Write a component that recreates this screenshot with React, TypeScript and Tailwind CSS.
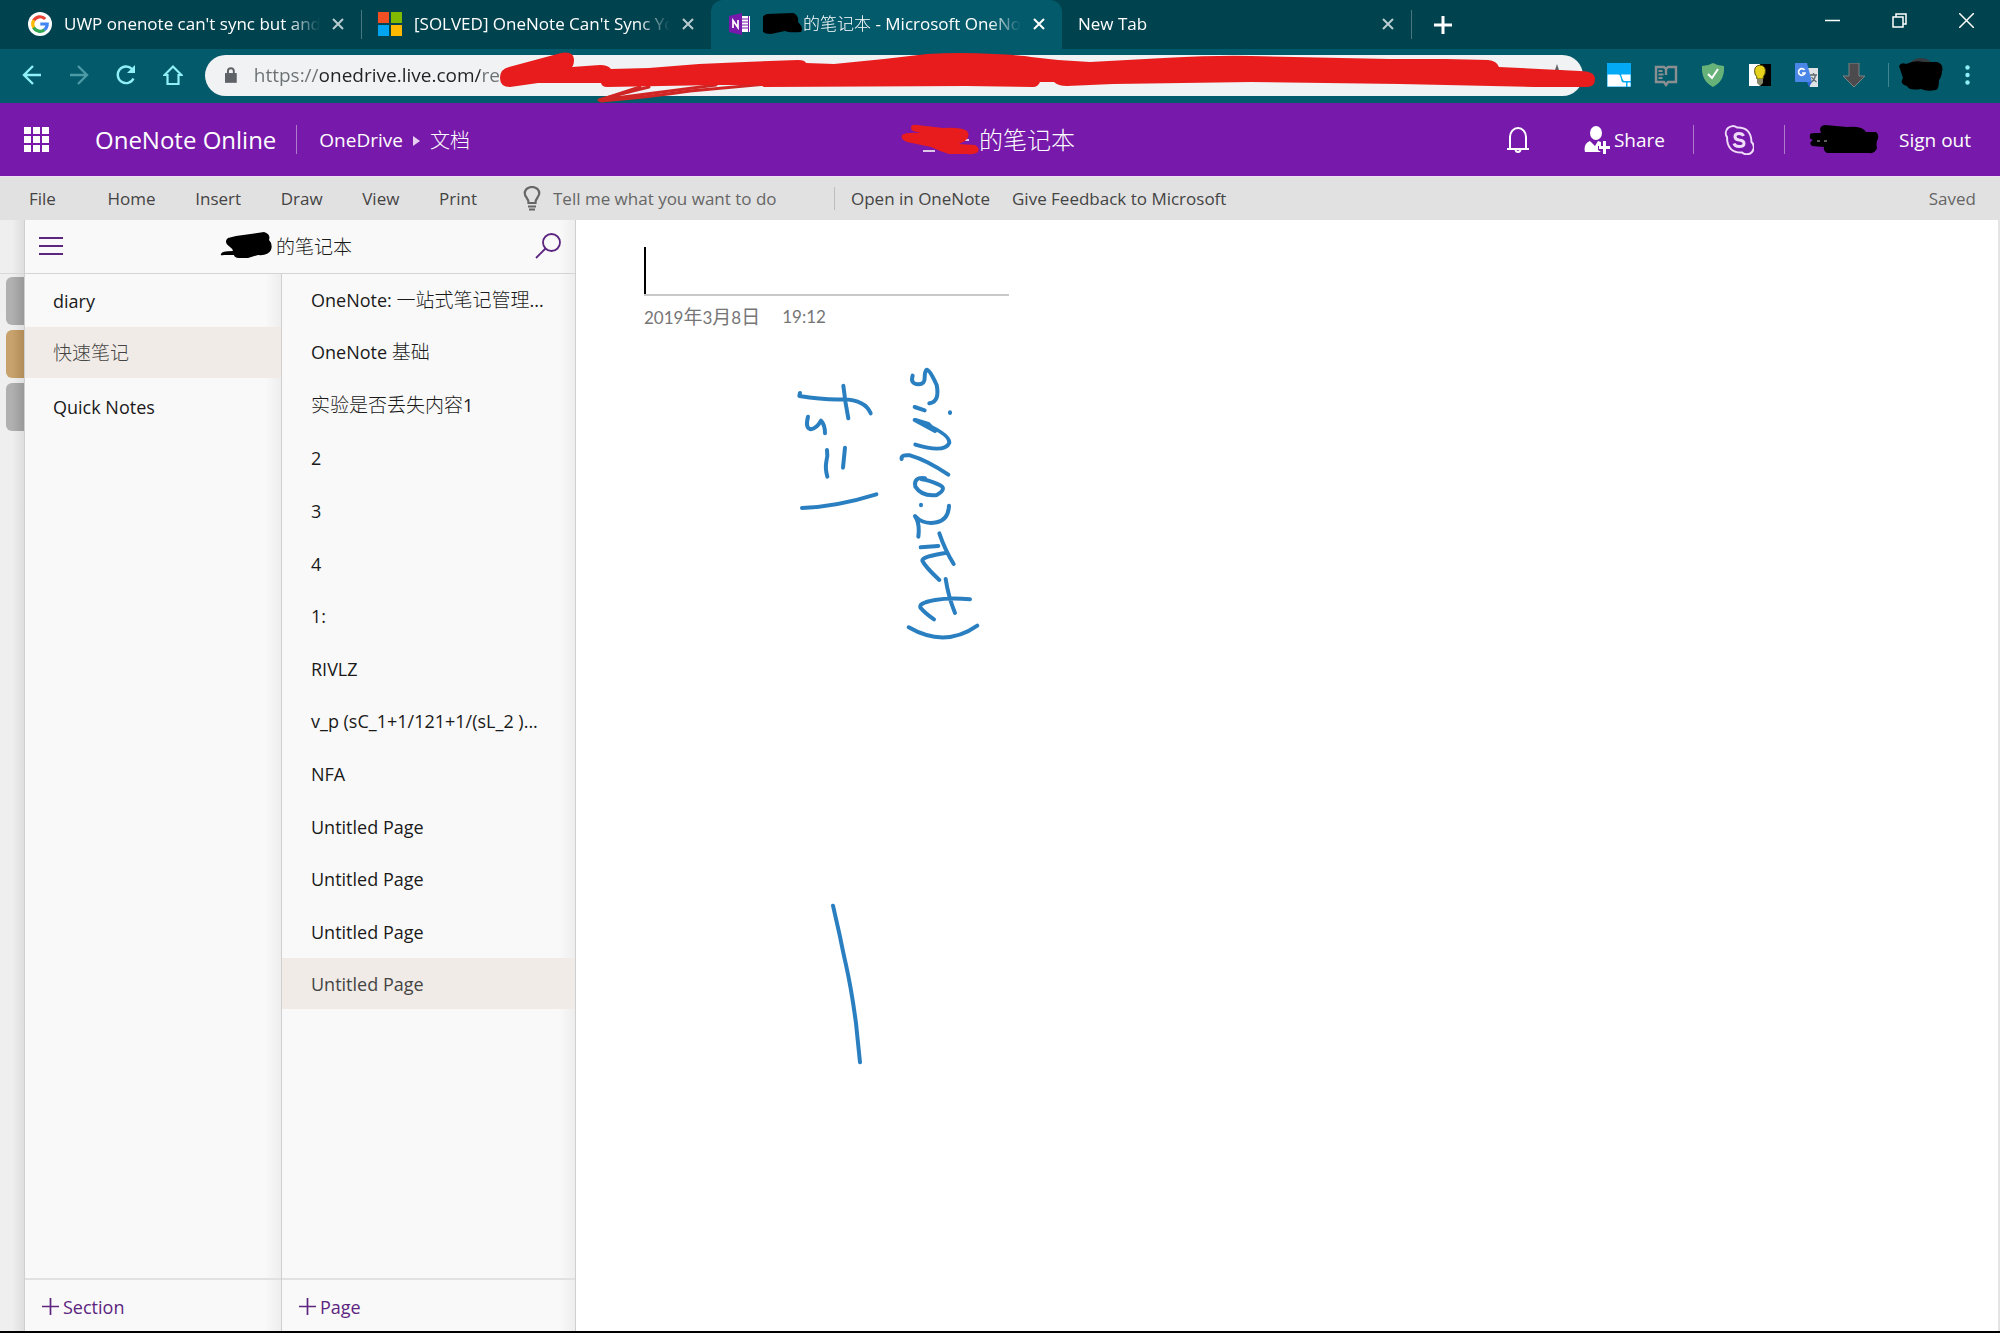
import type { ReactNode } from "react";

const CJK = "font-['Open_Sans','Noto_Sans_CJK_SC',sans-serif] font-light";

function Close({ className }: { className?: string }) {
  return (
    <svg className={className} viewBox="0 0 12 12" width="12" height="12" fill="none" stroke="currentColor" strokeWidth="2">
      <path d="M1 1l10 10M11 1L1 11" />
    </svg>
  );
}

function GoogleIcon() {
  return (
    <svg viewBox="0 0 24 24" width="24" height="24">
      <circle cx="12" cy="12" r="12" fill="#fff" />
      <g fill="none" strokeWidth="3.2">
        <path d="M17.2 7A7.2 7.2 0 0 0 5.7 8.5" stroke="#ea4335" />
        <path d="M5.9 8.2a7.2 7.2 0 0 0 0 7.6" stroke="#fbbc05" />
        <path d="M5.7 15.5a7.2 7.2 0 0 0 10.8 2.2" stroke="#34a853" />
        <path d="M16.3 17.8A7.2 7.2 0 0 0 19.2 12H12.3" stroke="#4285f4" />
      </g>
    </svg>
  );
}

function WindowsIcon() {
  return (
    <svg viewBox="0 0 24 24" width="24" height="24">
      <path fill="#f25022" d="M0 0h11v11H0z" />
      <path fill="#7fba00" d="M13 0h11v11H13z" />
      <path fill="#00a4ef" d="M0 13h11v11H0z" />
      <path fill="#ffb900" d="M13 13h11v11H13z" />
    </svg>
  );
}

function OneNoteIcon() {
  return (
    <svg viewBox="0 0 22 22" width="22" height="22">
      <path fill="#fff" d="M12 3h9v16h-9z" />
      <path stroke="#7719aa" strokeWidth="1" d="M13 6h6M13 9h6M13 12h6M13 15h6M19.500 3v16" fill="none" />
      <path fill="#7719aa" d="M0 3L13 0v22L0 19z" />
      <path d="M4 15V7.500l5 7V7" fill="none" stroke="#fff" strokeWidth="1.700" />
    </svg>
  );
}

function Tab({ icon, children, active, title }: { icon?: ReactNode; children: ReactNode; active?: boolean; title: string }) {
  return (
    <div
      className={
        active
          ? "relative flex h-full min-w-0 flex-1 items-center rounded-t-xl bg-[#035a6b] pr-[17px] pb-0.5 pl-[18px]"
          : "flex h-full min-w-0 flex-1 items-center pr-[17px] pb-0.5 pl-4"
      }
    >
      <button aria-label={title} className="flex min-w-0 flex-1 items-center gap-3 text-left">
        {icon}
        <span className="min-w-0 flex-1 overflow-hidden whitespace-nowrap [mask-image:linear-gradient(to_right,#000_calc(100%-32px),transparent)]">
          {children}
        </span>
      </button>
      <button aria-label="Close tab" className={active ? "ml-3 text-white" : "ml-3 text-[#b9cdd1]"}>
        <Close />
      </button>
    </div>
  );
}

function TabStrip() {
  return (
    <div className="flex h-[49px] items-center bg-[#00434f] pl-3 text-[17px] text-white">
      <div className="flex h-full w-[1400px] items-center">
        <Tab title="Search results" icon={<GoogleIcon />}>UWP onenote can't sync but and</Tab>
        <div className="h-[29px] w-px bg-[#4a7680]" />
        <Tab title="Solved" icon={<WindowsIcon />}>[SOLVED] OneNote Can't Sync Yo</Tab>
        <Tab title="Notebook" active icon={<OneNoteIcon />}>
          <span className="flex items-center">
            <svg viewBox="0 0 48 21" width="48" height="21" className="-ml-2 shrink-0">
              <path d="M2 14Q4 9 7 9Q6 3 12 1L38 0Q44 2 43 9Q49 15 46 19Q34 20 30 18L16 21Q8 21 7 17Q0 19 2 14z" />
            </svg>
            <span>
              <span className={CJK}>的笔记本</span> - Microsoft OneNo
            </span>
          </span>
        </Tab>
        <Tab title="New Tab">New Tab</Tab>
        <div className="h-[29px] w-px bg-[#4a7680]" />
      </div>
      <button aria-label="New tab" className="ml-[22px]">
        <svg viewBox="0 0 18 18" width="18" height="18" stroke="#fff" strokeWidth="3"><path d="M9 0v18M0 9h18" /></svg>
      </button>
      <div className="ml-auto flex items-center gap-[52px] pr-[26px] pb-2">
        <button aria-label="Minimize">
          <svg viewBox="0 0 15 15" width="15" height="15" stroke="#fff" strokeWidth="1.500"><path d="M0 7.500h15" /></svg>
        </button>
        <button aria-label="Restore">
          <svg viewBox="0 0 15 15" width="15" height="15" stroke="#fff" strokeWidth="1.500" fill="none"><path d="M1 4h10v10H1zM4 4V1h10v10h-3" /></svg>
        </button>
        <button aria-label="Close window">
          <svg viewBox="0 0 15 15" width="15" height="15" stroke="#fff" strokeWidth="1.500"><path d="M0 0l15 15M15 0L0 15" /></svg>
        </button>
      </div>
    </div>
  );
}

function NavButton({ label, children }: { label: string; children: ReactNode }) {
  return (
    <button aria-label={label}>
      <svg viewBox="0 0 20 22" width="20" height="22" fill="none" stroke="#8ff0f7" strokeWidth="2.400">{children}</svg>
    </button>
  );
}

function ExtIcon({ label, children }: { label: string; children: ReactNode }) {
  return (
    <button aria-label={label}>
      <svg viewBox="0 0 24 24" width="24" height="24">{children}</svg>
    </button>
  );
}

function Toolbar() {
  return (
    <div className="flex h-[54px] items-center bg-[#035a6b] pb-0.5 pl-[22px]">
      <div className="mr-[22px] flex items-center gap-[27px]">
        <NavButton label="Back"><path d="M19 11H3M11 2l-9 9 9 9" /></NavButton>
        <NavButton label="Forward"><path d="M1 11h16M9 2l9 9-9 9" stroke="#4c9aa6" /></NavButton>
        <NavButton label="Reload">
          <path d="M17.500 14.500A8.300 8.300 0 1 1 16 5" />
          <path d="M19 1v8h-8z" fill="#8ff0f7" stroke="none" />
        </NavButton>
        <NavButton label="Home"><path d="M4.500 11v9h11v-9h3L10 2.500 1.500 11z" strokeWidth="2.200" /></NavButton>
      </div>
      <div className="relative flex h-[41px] flex-1 items-center rounded-full bg-[#f0f2f3] pl-5">
        <svg viewBox="0 0 12 16" width="12" height="16" fill="#5f6368">
          <path d="M0 6h12v10H0z" />
          <path d="M3 7V4a3 3 0 0 1 6 0v3" fill="none" stroke="#5f6368" strokeWidth="2" />
        </svg>
        <input
          aria-label="Address"
          defaultValue="https://onedrive.live.com/re"
          className="ml-[17px] w-full bg-[linear-gradient(to_right,#6b7074_66px,#202124_66px,#202124_226px,#6b7074_226px)] bg-clip-text text-[19px] text-transparent outline-none"
        />
        <svg viewBox="490 45 1115 65" width="1115" height="65" className="pointer-events-none absolute top-[-10px] left-[285px]">
          <path d="M1557 64l2 6 6 1h-16l6-1z" fill="#5f6368" />
          <g fill="none" stroke="#d02525" strokeWidth="3" strokeLinejoin="round" strokeLinecap="round">
            <path d="M649 87Q620 94 599 100M601 101Q650 97 690 91L766 84" />
            <path d="M640 87L600 100Q660 92 716 85" />
          </g>
          <path
            fill="#e81c1c"
            d="M500 78Q500 69 509 67L561 53Q573 51 574 59Q574 65 572 67L600 65Q608 65 611 69L649 68L699 64L745 62L798 60Q805 60 806 63L834 64L884 59L927 54Q960 52 994 54Q1020 55 1031 57Q1060 61 1090 62L1164 58Q1220 55 1251 56L1389 59L1446 59L1488 60Q1497 61 1499 67L1580 71Q1595 71 1595 79Q1595 87 1587 87H1534L1400 84L1251 82L1113 84L1067 86Q1058 86 1054 82H1040Q1038 87 1033 87L966 86L764 87L760 85L716 85L607 87Q602 87 601 83H538L510 87Q500 87 500 78z"
          />
        </svg>
      </div>
      <div className="ml-6 flex items-center gap-[23px]">
        <ExtIcon label="Screenshot">
          <path fill="#03a9f4" d="M0 0h24v24H0z" /><path fill="#fff" d="M0.500 11.500H11.500Q13 11.500 13.500 14L14.500 18Q15 19.500 17 19.500H19V23.500H.5zM14 11.500H23.500V18H17.500Q16 18 15.500 16z" /><path fill="#fff" d="M20.500 19.500h3v4h-3z" />
        </ExtIcon>
        <ExtIcon label="Reader">
          <path fill="none" stroke="#8b8f91" strokeWidth="2.400" d="M2 4h8l2 2 2-2h8v15h-8l-2 3-2-3H2zM12 6v6" />
          <path stroke="#8b8f91" strokeWidth="1.800" d="M4.500 8h4M4.500 11.500h5M4.500 15h4" />
        </ExtIcon>
        <ExtIcon label="Ad blocker">
          <path fill="#67b279" d="M12 0q5 3 11 3 1 15-11 21Q0 18 1 3q6 0 11-3z" />
          <path d="M7 11l4 4 6-9" fill="none" stroke="#fff" strokeWidth="2" />
        </ExtIcon>
        <ExtIcon label="Lights">
          <path fill="#fff" d="M1 1h11v22H1z" /><path fill="#000" d="M12 1h11v22H12z" />
          <path fill="#e5d21c" stroke="#57520c" d="M9 16q0-3-2-5-2-8 5-9 7 1 5 9-2 2-2 5z" /><path fill="#88886a" d="M9 16h6v4l-3 3-3-3z" />
        </ExtIcon>
        <ExtIcon label="Translate">
          <path fill="#dfe3e6" d="M9 5h14v19H15z" /><path fill="#4a86e8" d="M0 0h12l5 19H1Q0 19 0 18z" /><path fill="#3367d6" d="M12 19h5l-3 5z" />
          <path d="M9.500 7A3.300 3.300 0 1 0 10 10H7" fill="none" stroke="#fff" strokeWidth="1.700" />
          <path d="M15 12h7M18.500 10v2M20.500 12q-1 5-4 7M16.500 14q2 3 5 5" fill="none" stroke="#5c6a70" strokeWidth="1.300" />
        </ExtIcon>
        <ExtIcon label="Download">
          <path fill="#4b4b4d" stroke="#7d8285" d="M7 0h10v13h6L12 24 1 13h6z" />
        </ExtIcon>
      </div>
      <div className="ml-[22px] h-6 w-px bg-[#3f8491]" />
      <button aria-label="Profile" className="ml-2.5">
        <svg viewBox="0 0 44 34" width="44" height="34">
          <circle cx="22" cy="14" r="14" fill="#33393f" />
          <path d="M0 8Q2 4 7 6Q16 2 24 4L38 4Q45 6 43 14Q42 20 40 22Q40 31 37 32Q28 34 22 31Q10 33 8 28Q0 26 4 20Q2 14 0 8z" />
        </svg>
      </button>
      <button aria-label="Menu" className="mr-[30px] ml-[22px]">
        <svg viewBox="0 0 5 20" width="5" height="20" fill="#8ff0f7">
          <circle cx="2.500" cy="2.500" r="2.200" /><circle cx="2.500" cy="10" r="2.200" /><circle cx="2.500" cy="17.500" r="2.200" />
        </svg>
      </button>
    </div>
  );
}

function Header() {
  return (
    <header className="relative flex h-[73px] items-center bg-[#7719aa] text-[19px] whitespace-nowrap text-white">
      <button aria-label="App launcher" className="ml-6">
        <svg viewBox="0 0 25 25" width="25" height="25" fill="#fff">
          <path d="M0 0h7v7H0zM9 0h7v7H9zM18 0h7v7h-7zM0 9h7v7H0zM9 9h7v7H9zM18 9h7v7h-7zM0 18h7v7H0zM9 18h7v7H9zM18 18h7v7h-7z" />
        </svg>
      </button>
      <a href="#home" className="ml-[46px] text-2xl">OneNote Online</a>
      <div className="ml-5 h-[29px] w-px bg-[#b07acb]" />
      <nav className="ml-[22px] flex items-center pt-0.5">
        <a href="#drive">OneDrive</a>
        <svg viewBox="0 0 7 10" width="7" height="10" fill="#e6d1f0" className="mx-2.5"><path d="M0 0l7 5-7 5z" /></svg>
        <a href="#docs" className={CJK + " text-xl"}>文档</a>
      </nav>
      <div className="absolute left-[901px] flex items-center">
        <svg viewBox="0 0 78 32" width="78" height="32">
          <path d="M22 27h12M62 16h6" stroke="#fff" strokeWidth="1.500" />
          <path fill="#e81c1c" d="M10 4Q10 0 16 1L42 4Q60 3 66 7Q70 12 64 17L58 20L74 21Q79 24 77 28Q73 31 66 30H48Q38 27 30 23L6 18Q-1 15 1 11Q5 8 20 9L12 7Q10 6 10 4z" />
        </svg>
        <span className={CJK + " text-2xl"}>的笔记本</span>
      </div>
      <div className="ml-auto flex items-center pr-[29px]">
        <button aria-label="Notifications">
          <svg viewBox="0 0 24 28" width="24" height="28" fill="none" stroke="#fff" strokeWidth="2">
            <path d="M4 23V11a8 9 0 0 1 16 0v12M1 23h22M9.500 23a2.500 3 0 0 0 5 0" />
          </svg>
        </button>
        <button className="ml-[54px] flex items-center gap-1">
          <svg viewBox="0 0 26 28" width="26" height="28" fill="#fff">
            <ellipse cx="12" cy="7" rx="6" ry="7" />
            <path d="M6 15l5 5 3-5 3 1v4h-3v4l3 2H1Q-1 18 6 15z" />
            <path d="M19 15h3v5h4v3h-4v5h-3v-5h-4v-3h4z" />
          </svg>
          <span className="pt-0.5">Share</span>
        </button>
        <div className="ml-7 h-[29px] w-px bg-[#b07acb]" />
        <button aria-label="Skype" className="ml-[30px]">
          <svg viewBox="0 0 30 30" width="30" height="30" fill="none" stroke="#efdcf8" strokeWidth="2">
            <path d="M3 12A7 7 0 0 1 13 2.500Q27 2 27.500 17A7 7 0 0 1 18 27.500Q3 28 3 12z" />
            <path d="M19.500 11Q18.500 8.500 15 8.500q-4 0-4 3t4 3.500q5 .5 5 3.500t-5 3q-4 0-5-3" strokeWidth="3" />
          </svg>
        </button>
        <div className="ml-[30px] h-[29px] w-px bg-[#b07acb]" />
        <svg viewBox="0 0 70 29" width="70" height="29" className="ml-6">
          <path d="M1 11Q0 8 6 8L12 8Q9 1 16 0L38 2Q54 1 57 7L67 7Q71 10 68 16Q67 19 68 23Q66 29 60 28H18Q14 26 15 22L3 21Q-1 18 4 15Q0 14 1 11z" />
          <path d="M8 16h14" stroke="#bbb" strokeDasharray="3 4" />
        </svg>
        <a href="#signout" className="ml-5 pt-0.5">Sign out</a>
      </div>
    </header>
  );
}

function Ribbon() {
  return (
    <div className="flex h-11 items-center border-t border-[#eedff5] bg-[#e1e1e1] pr-6 pl-[29px] text-[17px] whitespace-nowrap text-[#444]">
      <div className="flex w-[448px] justify-between">
        {["File", "Home", "Insert", "Draw", "View", "Print"].map((t) => (
          <button key={t} className="first:mr-3">{t}</button>
        ))}
      </div>
      <label className="ml-[46px] flex items-center gap-3">
        <svg viewBox="0 0 18 25" width="18" height="25" fill="none" stroke="#666" strokeWidth="2.200">
          <path d="M5.500 17q0-3-2-5.500Q0 7 3.500 3q5.500-4 11 0 3.500 4 0 8.500-2 2.500-2 5.500z" />
          <path d="M5 20.500h8M6 23.500h6" />
        </svg>
        <input aria-label="Tell me" placeholder="Tell me what you want to do" className="w-[281px] outline-none placeholder:text-[#666]" />
      </label>
      <div className="h-[23px] w-px bg-[#bdbdbd]" />
      <button className="ml-4">Open in OneNote</button>
      <button className="ml-[22px]">Give Feedback to Microsoft</button>
      <span className="ml-auto text-[#666]">Saved</span>
    </div>
  );
}

const ITEM_CJK = CJK + " text-[19px]";

const pages = [
  <>OneNote: <span className={ITEM_CJK}>一站式笔记管理</span>...</>,
  <>OneNote <span className={ITEM_CJK}>基础</span></>,
  <><span className={ITEM_CJK}>实验是否丢失内容</span>1</>,
  "2", "3", "4", "1:", "RIVLZ", "v_p (sC_1+1/121+1/(sL_2 )...", "NFA",
  "Untitled Page", "Untitled Page", "Untitled Page", "Untitled Page",
];

const sections = ["diary", <span className={ITEM_CJK}>快速笔记</span>, "Quick Notes"];

const EDGE = "bg-[linear-gradient(to_left,#eeeeee,#f9f9f9_16px)]";

function AddButton({ children }: { children: ReactNode }) {
  return (
    <button className="flex h-[53px] w-full items-center gap-1 border-t-2 border-[#e1e1e1] pt-0.5 pl-[17px] text-[#5c2580]">
      <svg viewBox="0 0 17 17" width="17" height="17" stroke="#5c2580" strokeWidth="1.700"><path d="M8.500 0v17M0 8.500h17" /></svg>
      {children}
    </button>
  );
}

function Sidebar() {
  return (
    <aside className="flex text-lg text-[#1a1a1a]">
      <div className="w-6 bg-[linear-gradient(to_left,#dedede,#efefef_12px)]">
        <div className="h-[54px] border-b border-[#d8d8d8]" />
        <div className="flex flex-col items-end gap-[5px] pt-[3px]">
          <div className="h-12 w-[18px] rounded-l-md bg-[linear-gradient(to_left,#999,#b0b0b0_12px)]" />
          <div className="h-12 w-[18px] rounded-l-md bg-[linear-gradient(to_left,#b28c58,#c8a26c_12px)]" />
          <div className="h-12 w-[18px] rounded-l-md bg-[linear-gradient(to_left,#999,#b0b0b0_12px)]" />
        </div>
      </div>
      <div className="flex w-[552px] flex-col border-x border-[#cfcfcf]">
        <div className={"flex h-[54px] items-center justify-between border-b border-[#d4d4d4] pr-3.5 pb-0.5 pl-3.5 " + EDGE}>
          <button aria-label="Navigation">
            <svg viewBox="0 0 24 18" width="24" height="18" stroke="#5c2580" strokeWidth="2"><path d="M0 1h24M0 9h24M0 17h24" /></svg>
          </button>
          <div className="mr-[26px] flex items-center gap-1">
            <svg viewBox="0 0 52 26" width="52" height="26">
              <path d="M1 22Q1 19 13 19Q13 17 10 15Q3 10 8 6L16 4L44 0Q51 2 49 8Q53 12 51 18Q48 24 38 23L28 26H18Q14 25 14 23H4Q0 24 1 22z" />
            </svg>
            <span className={CJK + " pt-1 text-[19px]"}>的笔记本</span>
          </div>
          <button aria-label="Search">
            <svg viewBox="0 0 26 26" width="26" height="26" fill="none" stroke="#5c2580" strokeWidth="1.800"><circle cx="16.500" cy="9.500" r="8.500" /><path d="M10.500 15.500L1 25" /></svg>
          </button>
        </div>
        <div className="flex flex-1">
          <div className={"flex w-[257px] flex-col border-r border-[#cfcfcf] " + EDGE}>
            <ul className="flex flex-1 flex-col gap-0.5">
              {sections.map((s, i) => (
                <li key={i}>
                  <button className={i === 1 ? "h-[51px] w-full bg-[#f0ebe6] pt-0.5 pl-7 text-left text-[#444]" : "h-[51px] w-full pt-0.5 pl-7 text-left"}>{s}</button>
                </li>
              ))}
            </ul>
            <AddButton>Section</AddButton>
          </div>
          <div className={"flex min-w-0 flex-1 flex-col " + EDGE}>
            <ul className="flex h-[735px] flex-col justify-between">
              {pages.map((p, i) => (
                <li key={i}>
                  <button className={i === 13 ? "h-[51px] w-full bg-[#f0ebe6] pt-0.5 pl-[29px] text-left text-[#444]" : "h-[51px] w-full pt-0.5 pl-[29px] text-left whitespace-nowrap"}>{p}</button>
                </li>
              ))}
            </ul>
            <div className="mt-auto"><AddButton>Page</AddButton></div>
          </div>
        </div>
      </div>
    </aside>
  );
}

function Canvas() {
  return (
    <main className="relative flex-1 border-r-2 border-[#e4e4e4] bg-white pt-[27px] pl-[68px]">
      <input aria-label="Page title" className="block h-[49px] w-[365px] border-b-2 border-[#c8c8c8] bg-[linear-gradient(#000,#000)] bg-[length:2px_47px] bg-no-repeat outline-none" />
      <p className="mt-[7px] flex gap-[22px] font-['Lato','Noto_Sans_CJK_SC',sans-serif] text-[17px] text-[#767676]">
        <span>
          2019<span className="text-[19px]">年</span>3<span className="text-[19px]">月</span>8<span className="text-[19px]">日</span>
        </span>
        <span className="leading-[28px]">19:12</span>
      </p>
      <svg
        viewBox="0 0 1260 2700" width="420" height="900" className="pointer-events-none absolute top-0 left-11"
        fill="none" stroke="#2a7fc1" strokeWidth="12" strokeLinecap="round" strokeLinejoin="round"
      >
        <path d="M540 519L538 528Q610 540 670 538Q735 540 752 580M670 497Q675 545 685 595" />
        <path d="M564 590Q555 625 572 628Q590 625 603 602Q615 615 615 640" />
        <path d="M621 690Q624 710 619 725Q615 745 622 770M675 683L669 743" />
        <path d="M546 864Q650 860 769 823" />
        <path d="M878 467Q870 492 895 493Q915 493 914 472Q914 455 920 449Q930 450 950 495Q960 545 928 550" />
        <path d="M884 561L914 571M990 577v2" />
        <path d="M884 600L945 633L925 612L886 600Q990 640 988 668Q975 700 886 674" />
        <path d="M845 717Q842 703 870 706Q920 720 985 764" />
        <path d="M915 775Q880 770 886 800Q905 830 950 825Q985 805 955 793Q925 780 905 778" />
        <path d="M903 854v2M987 857Q985 900 950 907Q910 915 885 888Q900 910 895 950" />
        <path d="M902 982L955 978M958 940Q975 990 1001 1032M980 998Q905 1010 907 1022Q915 1040 958 1080" />
        <path d="M977 1077Q985 1130 1005 1179M1050 1138Q990 1132 945 1140Q890 1150 903 1165Q915 1180 942 1198" />
        <path d="M866 1222Q975 1285 1072 1217" />
        <path d="M639 2057Q650 2105 660 2150Q670 2200 677 2230Q695 2310 708 2410L720 2527" />
      </svg>
    </main>
  );
}

export default function App() {
  return (
    <div className="flex min-h-screen flex-col border-b-2 border-black bg-white font-['Open_Sans','Noto_Sans_CJK_SC',sans-serif]">
      <TabStrip />
      <Toolbar />
      <Header />
      <Ribbon />
      <div className="flex flex-1">
        <Sidebar />
        <Canvas />
      </div>
    </div>
  );
}
